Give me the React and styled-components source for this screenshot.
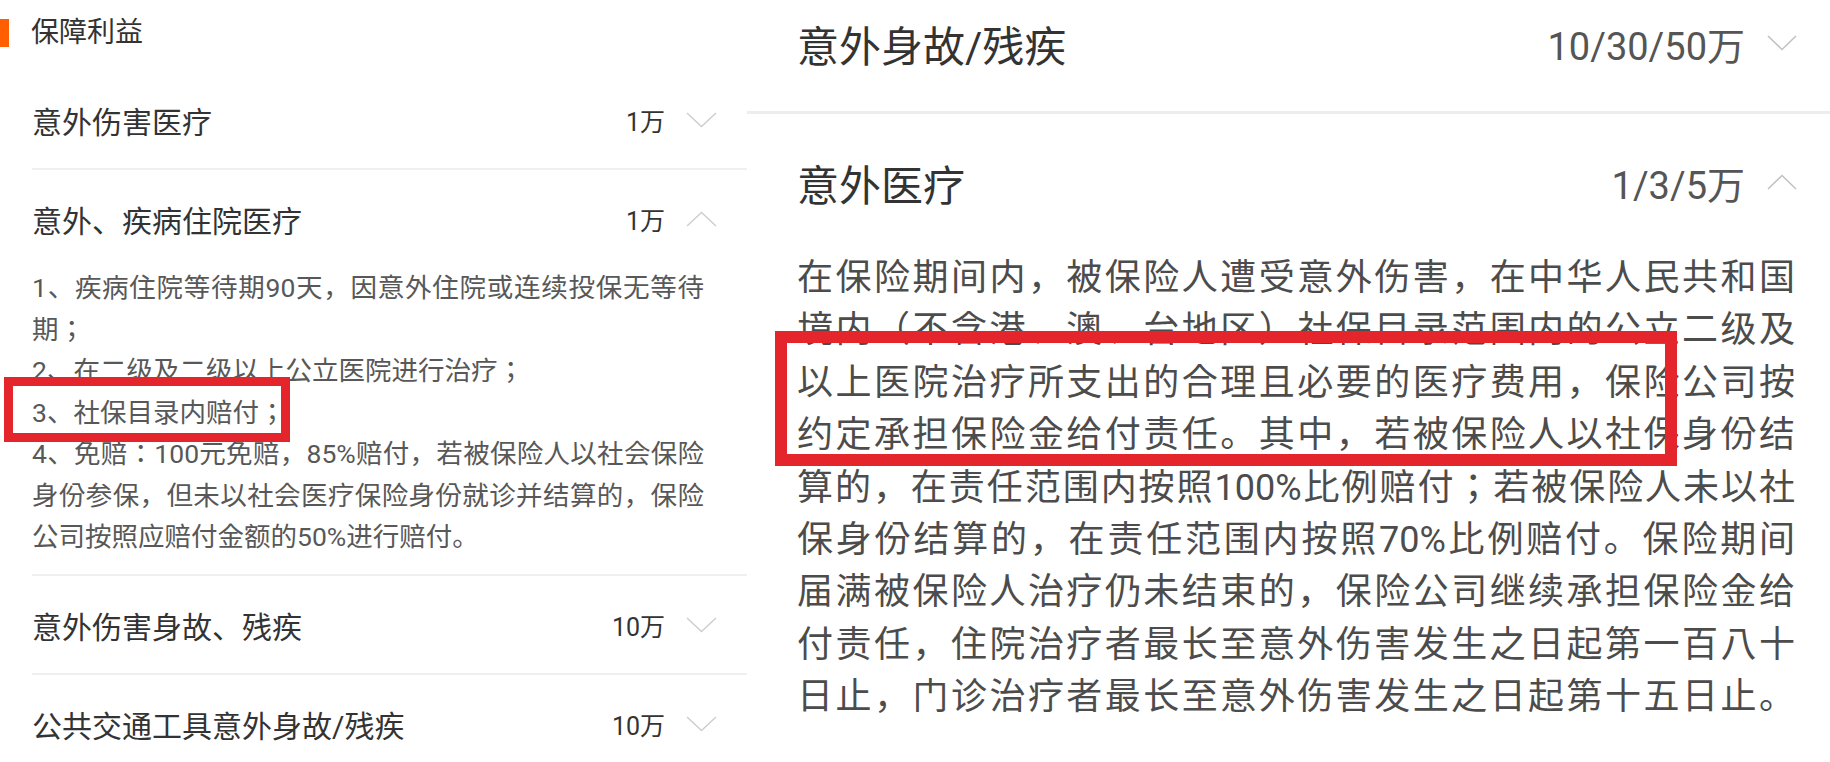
import React from 'react';
import styled, { createGlobalStyle } from 'styled-components';

const GlobalStyle = createGlobalStyle`
  html, body {
    margin: 0;
    padding: 0;
    background: #ffffff;
  }
  body {
    width: 1830px;
    height: 762px;
    overflow: hidden;
    font-family: Roboto, "Noto Sans CJK SC", "Noto Sans", sans-serif;
    -webkit-font-smoothing: antialiased;
  }
`;

const Page = styled.div`
  display: grid;
  grid-template-columns: 747px 1fr;
  width: 1830px;
  height: 762px;
  overflow: hidden;
  background: #ffffff;
`;

const Panel = styled.section`
  position: relative;
  overflow: hidden;
  background: #ffffff;
`;

const SectionHeader = styled.div`
  display: flex;
  align-items: center;
  gap: 22px;
  height: 28px;
  padding: 19px 0 24px 0;
`;

const Marker = styled.span`
  width: 9px;
  height: 28px;
  background: #ff5f00;
`;

const SectionTitle = styled.h2`
  margin: 0;
  font-size: 28px;
  font-weight: 400;
  line-height: 28px;
  color: #333333;
`;

const List = styled.div`
  display: flex;
  flex-direction: column;
  margin-top: ${(p) => p.$offset || 0}px;
`;

const Item = styled.div`
  margin-left: ${(p) => (p.$large ? 0 : 32)}px;
  border-bottom: ${(p) => (p.$large ? '3px solid #ededed' : '2px solid #efefef')};
`;

const ItemHead = styled.div`
  display: flex;
  align-items: center;
  justify-content: space-between;
  height: ${(p) => (p.$large ? 136 : 97)}px;
  padding-left: ${(p) => (p.$large ? 50 : 0)}px;
  padding-right: ${(p) => (p.$large ? 33 : 30)}px;
`;

const ItemTitle = styled.span`
  font-size: ${(p) => (p.$large ? 42 : 30)}px;
  font-weight: 400;
  color: #333333;
  white-space: nowrap;
`;

const ItemMeta = styled.span`
  display: flex;
  align-items: center;
  gap: ${(p) => (p.$large ? 22 : 21)}px;
`;

const Amount = styled.span`
  font-size: ${(p) => (p.$large ? 38 : 25)}px;
  color: ${(p) => (p.$large ? '#555555' : '#333333')};
  white-space: nowrap;
`;

const ChevronSvg = styled.svg`
  display: block;
  flex: none;
`;

const Body = styled.div`
  padding: ${(p) => (p.$large ? '2px 0 80px 50px' : '0 0 16.5px 0')};
  color: ${(p) => (p.$large ? '#4c4c4c' : '#585858')};
  font-family: Roboto, "Noto Sans CJK JP", "Noto Sans CJK SC", sans-serif;
`;

const Line = styled.div`
  width: ${(p) => (p.$large ? 998 : 672)}px;
  font-size: ${(p) => (p.$large ? 36 : 26.5)}px;
  line-height: ${(p) => (p.$large ? 52.4 : 41.5)}px;
  text-align: justify;
  text-align-last: ${(p) => (p.$full ? 'justify' : 'left')};
`;

const Highlight = styled.div`
  position: absolute;
  box-sizing: border-box;
  border: ${(p) => p.$border}px solid #e4262c;
  pointer-events: none;
`;

function Chevron({ up, large }) {
  const w = large ? 30 : 31;
  const h = 16;
  const points = up
    ? `1,${h - 1} ${w / 2},1.5 ${w - 1},${h - 1}`
    : `1,1 ${w / 2},${h - 1.5} ${w - 1},1`;
  return (
    <ChevronSvg width={w} height={h} viewBox={`0 0 ${w} ${h}`}>
      <polyline
        points={points}
        fill="none"
        stroke={large ? '#c2c2c2' : '#cdcdcd'}
        strokeWidth={large ? 1.6 : 1.4}
      />
    </ChevronSvg>
  );
}

function Benefit({ title, amount, open, large, lines }) {
  return (
    <Item $large={large}>
      <ItemHead $large={large}>
        <ItemTitle $large={large}>{title}</ItemTitle>
        <ItemMeta $large={large}>
          <Amount $large={large}>{amount}</Amount>
          <Chevron up={open} large={large} />
        </ItemMeta>
      </ItemHead>
      {open && lines && (
        <Body $large={large}>
          {lines.map((l, i) => (
            <Line key={i} $large={large} $full={l.full}>
              {l.text}
            </Line>
          ))}
        </Body>
      )}
    </Item>
  );
}

const leftLines = [
  { text: '1、疾病住院等待期90天，因意外住院或连续投保无等待', full: true },
  { text: '期；' },
  { text: '2、在二级及二级以上公立医院进行治疗；' },
  { text: '3、社保目录内赔付；' },
  { text: '4、免赔：100元免赔，85%赔付，若被保险人以社会保险', full: true },
  { text: '身份参保，但未以社会医疗保险身份就诊并结算的，保险', full: true },
  { text: '公司按照应赔付金额的50%进行赔付。' },
];

const rightLines = [
  { text: '在保险期间内，被保险人遭受意外伤害，在中华人民共和国', full: true },
  { text: '境内（不含港、澳、台地区）社保目录范围内的公立二级及', full: true },
  { text: '以上医院治疗所支出的合理且必要的医疗费用，保险公司按', full: true },
  { text: '约定承担保险金给付责任。其中，若被保险人以社保身份结', full: true },
  { text: '算的，在责任范围内按照100%比例赔付；若被保险人未以社', full: true },
  { text: '保身份结算的，在责任范围内按照70%比例赔付。保险期间', full: true },
  { text: '届满被保险人治疗仍未结束的，保险公司继续承担保险金给', full: true },
  { text: '付责任，住院治疗者最长至意外伤害发生之日起第一百八十', full: true },
  { text: '日止，门诊治疗者最长至意外伤害发生之日起第十五日止。', full: true },
];

export default function App() {
  return (
    <>
      <GlobalStyle />
      <Page>
        <Panel>
          <SectionHeader>
            <Marker />
            <SectionTitle>保障利益</SectionTitle>
          </SectionHeader>
          <List>
            <Benefit title="意外伤害医疗" amount="1万" />
            <Benefit title="意外、疾病住院医疗" amount="1万" open lines={leftLines} />
            <Benefit title="意外伤害身故、残疾" amount="10万" />
            <Benefit title="公共交通工具意外身故/残疾" amount="10万" />
          </List>
          <Highlight $border={9} style={{ left: 4, top: 377, width: 286, height: 65 }} />
        </Panel>
        <Panel>
          <List $offset={-25}>
            <Benefit large title="意外身故/残疾" amount="10/30/50万" />
            <Benefit large title="意外医疗" amount="1/3/5万" open lines={rightLines} />
          </List>
          <Highlight $border={12} style={{ left: 28, top: 331, width: 902, height: 135 }} />
        </Panel>
      </Page>
    </>
  );
}
